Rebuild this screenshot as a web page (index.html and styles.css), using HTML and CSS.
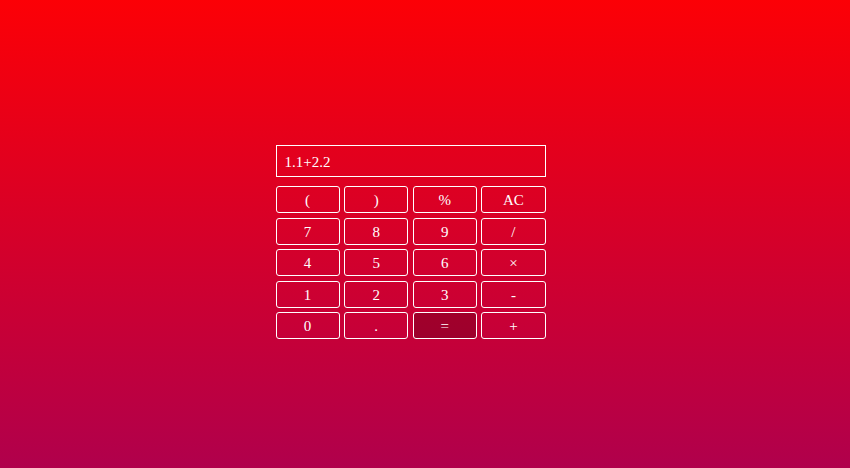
FILE: index.html
```html
<!DOCTYPE html>
<html>
<head>
<meta charset="utf-8">
<link rel="stylesheet" href="styles.css">
</head>
<body>
<div class="calc">
  <div class="display">1.1+2.2</div>
  <div class="keys">
    <button class="key">(</button>
    <button class="key">)</button>
    <button class="key">%</button>
    <button class="key">AC</button>
    <button class="key">7</button>
    <button class="key">8</button>
    <button class="key">9</button>
    <button class="key">/</button>
    <button class="key">4</button>
    <button class="key">5</button>
    <button class="key">6</button>
    <button class="key">×</button>
    <button class="key">1</button>
    <button class="key">2</button>
    <button class="key">3</button>
    <button class="key">-</button>
    <button class="key">0</button>
    <button class="key">.</button>
    <button class="key key-eq">=</button>
    <button class="key">+</button>
  </div>
</div>
</body>
</html>
```
FILE: styles.css
```css
html, body {
  margin: 0;
  height: 100%;
}
body {
  box-sizing: border-box;
  min-height: 468px;
  background: linear-gradient(to bottom, #fc0006, #b0004c);
  display: flex;
  align-items: center;
  justify-content: center;
  padding: 16px 29px 0 0;
  font-family: "Liberation Serif", "Times New Roman", serif;
  color: #fff;
}
.calc {
  width: 270px;
}
.display {
  box-sizing: border-box;
  height: 32px;
  border: 1px solid #fff;
  padding: 3px 8px 0;
  display: flex;
  align-items: center;
  font-size: 15px;
  margin-bottom: 9px;
}
.keys {
  display: grid;
  grid-template-columns: repeat(4, 1fr);
  grid-auto-rows: 27px;
  gap: 4.5px;
}
.key {
  box-sizing: border-box;
  background: transparent;
  border: 1px solid #fff;
  border-radius: 3px;
  color: #fff;
  font-family: inherit;
  font-size: 15px;
  padding: 2px 0 0;
  margin: 0;
}
.key-eq {
  background: rgba(0, 0, 0, 0.2);
}
```
